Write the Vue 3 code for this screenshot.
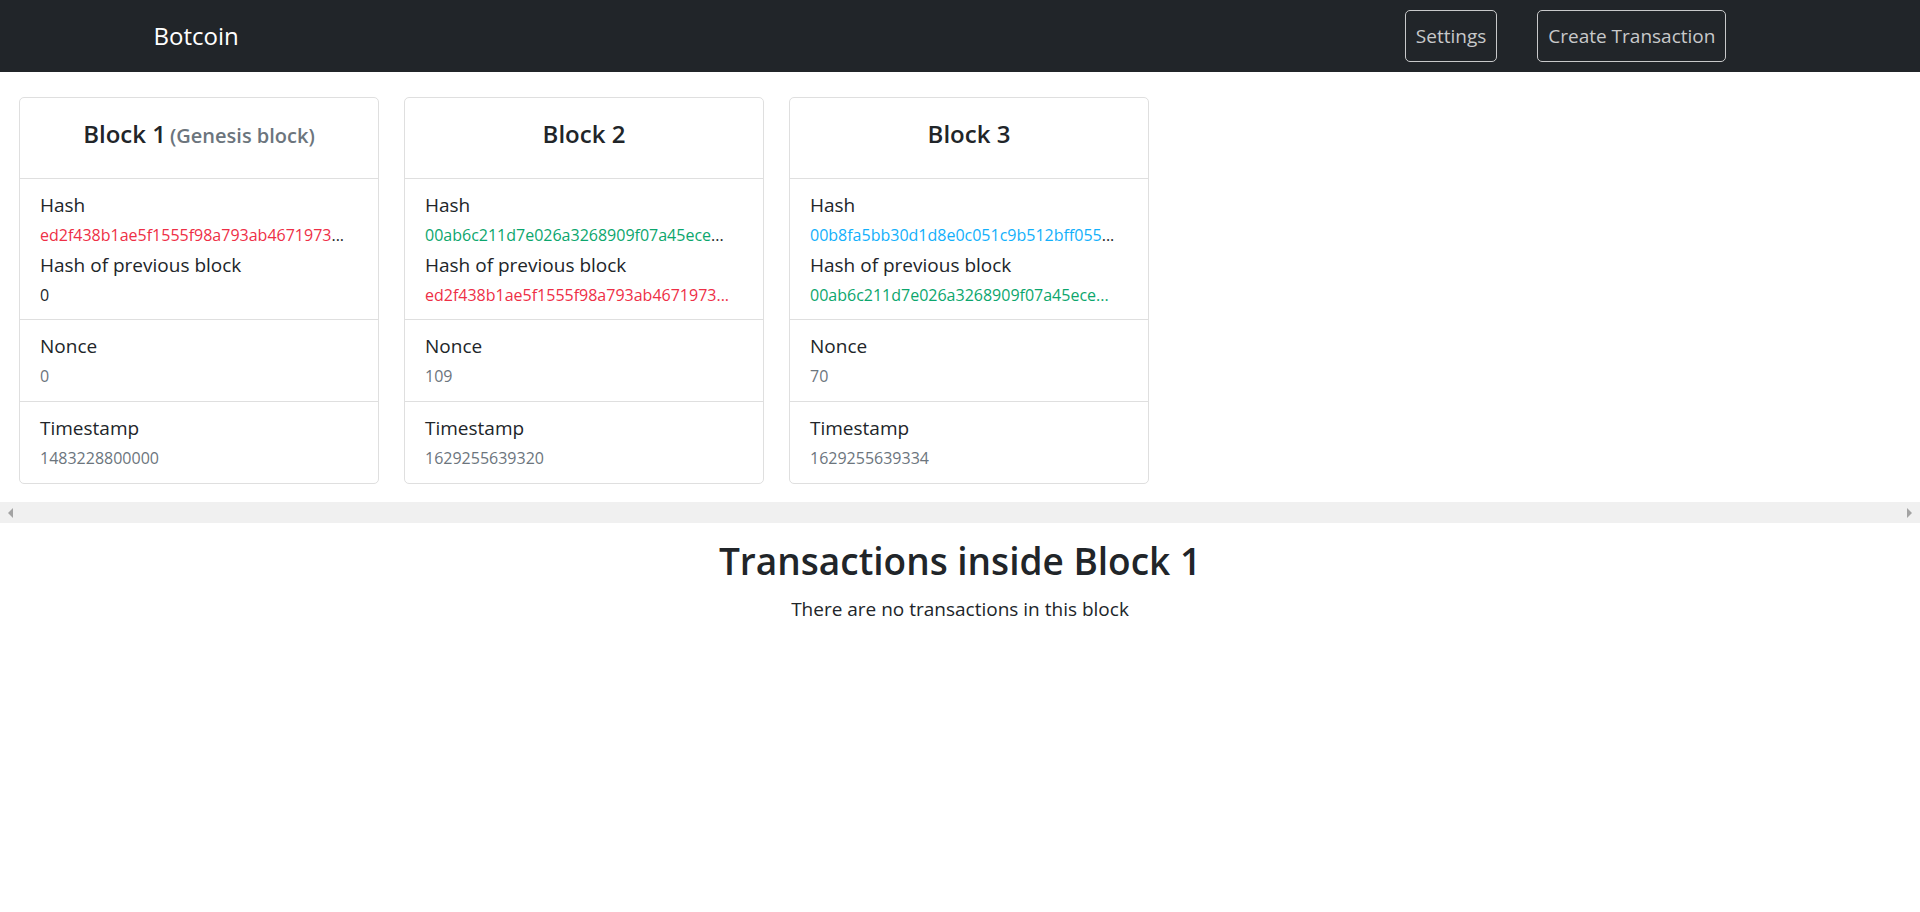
<script setup>
const hashes = {
  genesis: 'ed2f438b1ae5f1555f98a793ab4671973',
  second: '00ab6c211d7e026a3268909f07a45ece',
  third: '00b8fa5bb30d1d8e0c051c9b512bff055',
}

const blocks = [
  { id: 1, note: '(Genesis block)', hash: hashes.genesis, tone: 'red', prev: '0', prevTone: 'dark', nonce: 0, time: 1483228800000 },
  { id: 2, hash: hashes.second, tone: 'green', prev: hashes.genesis + '...', prevTone: 'red', nonce: 109, time: 1629255639320 },
  { id: 3, hash: hashes.third, tone: 'blue', prev: hashes.second + '...', prevTone: 'green', nonce: 70, time: 1629255639334 },
]
</script>

<template>
  <header class="navbar">
    <a class="brand" href="#">Botcoin</a>
    <nav class="actions">
      <button type="button" class="nav-button">Settings</button>
      <button type="button" class="nav-button">Create Transaction</button>
    </nav>
  </header>

  <main>
    <section class="blocks" aria-label="Blocks">
      <article v-for="block in blocks" :key="block.id" class="card">
        <h2 class="card-title">
          Block {{ block.id }}<small v-if="block.note">{{ block.note }}</small>
        </h2>
        <div class="group">
          <div>Hash</div>
          <div class="value"><span :class="block.tone">{{ block.hash }}</span>...</div>
          <div>Hash of previous block</div>
          <div class="value" :class="block.prevTone">{{ block.prev }}</div>
        </div>
        <div class="group">
          <div>Nonce</div>
          <div class="value muted">{{ block.nonce }}</div>
        </div>
        <div class="group">
          <div>Timestamp</div>
          <div class="value muted">{{ block.time }}</div>
        </div>
      </article>
    </section>

    <div class="scrollbar">
      <button type="button" class="arrow" aria-label="Scroll left">
        <svg width="5" height="10" viewBox="0 0 5 10"><path d="M5 0v10L0 5z" fill="#a3a3a3" /></svg>
      </button>
      <button type="button" class="arrow" aria-label="Scroll right">
        <svg width="5" height="10" viewBox="0 0 5 10"><path d="M0 0v10l5-5z" fill="#a3a3a3" /></svg>
      </button>
    </div>

    <section class="transactions">
      <h1>Transactions inside Block 1</h1>
      <p>There are no transactions in this block</p>
    </section>
  </main>
</template>

<style>
body {
  margin: 0;
  background: #fff;
}
</style>

<style scoped>
.navbar,
main {
  font-family: "Segoe UI", "Open Sans", "Noto Sans", sans-serif;
  font-size: 19px;
  line-height: 30px;
  color: #212529;
}

.navbar {
  display: flex;
  align-items: center;
  justify-content: space-between;
  min-height: 72px;
  padding: 0 8%;
  box-sizing: border-box;
  background: #212529;
}

.brand {
  font-size: 24px;
  color: #fff;
  text-decoration: none;
}

.actions {
  display: flex;
}

.nav-button {
  margin-right: 40px;
  padding: 10px;
  border: 1px solid #c8c9ca;
  border-radius: 5px;
  background: transparent;
  font: inherit;
  color: #c8c9ca;
}

.blocks {
  display: flex;
  gap: 25px;
  padding: 25px 19px 18px;
}

.card {
  flex: 0 0 360px;
  min-width: 0;
  box-sizing: border-box;
  border: 1px solid #dfdfdf;
  border-radius: 5px;
}

.card-title {
  margin: 0;
  padding: 21px 20px 29px;
  font-size: 24px;
  font-weight: 600;
  line-height: 30px;
  text-align: center;
}

.card-title small {
  margin-left: 4px;
  font-size: 20px;
  line-height: 20px;
  color: #6c757d;
}

.group {
  padding: 11px 20px 9px;
  border-top: 1px solid #dfdfdf;
}

.group + .group {
  padding-bottom: 10px;
}

.value {
  font-size: 16px;
  white-space: nowrap;
}

.red {
  color: #ee2f46;
}

.green {
  color: #0ca66d;
}

.blue {
  color: #12b0fb;
}

.dark {
  color: #212529;
}

.muted {
  color: #6c757d;
}

.scrollbar {
  display: flex;
  justify-content: space-between;
  background: #f0f0f0;
}

.arrow {
  display: flex;
  align-items: center;
  justify-content: center;
  width: 21px;
  height: 21px;
  padding: 0;
  border: 0;
  background: transparent;
}

.transactions {
  padding-top: 14px;
  text-align: center;
}

h1 {
  margin: 0 0 9px;
  font-size: 37px;
  font-weight: 600;
  line-height: 48px;
}

p {
  margin: 0;
}
</style>
